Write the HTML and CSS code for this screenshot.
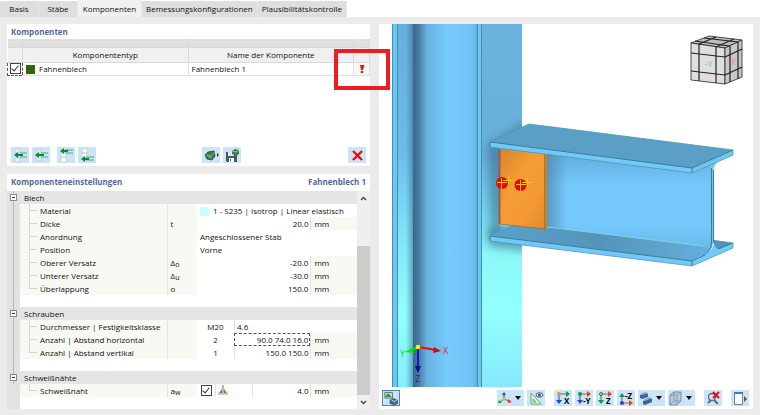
FILE: index.html
```html
<!DOCTYPE html>
<html lang="de">
<head>
  <meta charset="UTF-8" />
  <meta name="viewport" content="width=device-width, initial-scale=1.0"/>
  <title>Komponenten</title>
  <link rel="stylesheet" href="styles.css">
</head>
<body>
  <nav class="tabs">
    <button class="tab">Basis</button>
    <button class="tab">Stäbe</button>
    <button class="tab active">Komponenten</button>
    <button class="tab wide">Bemessungskonfigurationen</button>
    <button class="tab wide">Plausibilitätskontrolle</button>
  </nav>

  <main class="workspace">
    <div class="left">
      <section class="panel components">
        <h2>Komponenten</h2>
        <table class="comp-table">
          <colgroup><col class="c-check"><col><col><col class="c-flag"></colgroup>
          <thead>
            <tr class="strip"><th></th><th></th><th></th><th></th></tr>
            <tr><th></th><th>Komponententyp</th><th>Name der Komponente</th><th></th></tr>
          </thead>
          <tbody>
            <tr>
              <td class="check-cell"><input type="checkbox" class="check" aria-label="Fahnenblech" checked></td>
              <td><span class="swatch green"></span>Fahnenblech</td>
              <td class="name">Fahnenblech 1</td>
              <td class="flag">
                <svg width="6" height="10" viewBox="0 0 6 10"><path d="M1 1h4.500L4 6H2z" fill="#f01020"/><circle cx="3" cy="8" r="1.3" fill="#f01020"/></svg>
              </td>
            </tr>
          </tbody>
        </table>
        <div class="toolbar comp-tools">
          <div class="group">
            <button class="tool" aria-label="Davor einfügen"><svg width="17" height="15" viewBox="0 0 17 15"><path d="M3 1h5v4H3zM3 10h5v4H3z" fill="#e8eef4" stroke="#b9c4d0" stroke-width=".6"/><path d="M8 5h7M8 9h7" stroke="#55a56c"/><path d="M2 7l4-3v2h5v2H6v2z" fill="#07883c"/></svg></button>
            <button class="tool" aria-label="Dahinter einfügen"><svg width="17" height="15" viewBox="0 0 17 15"><path d="M3 1h5v12H3z" fill="#dce5ee" stroke="#b9c4d0" stroke-width=".6"/><path d="M8 5h7M8 9h7" stroke="#55a56c"/><path d="M2 7l4-3v2h5v2H6v2z" fill="#07883c"/></svg></button>
          </div>
          <div class="group">
            <button class="tool" aria-label="Nach oben"><svg width="17" height="15" viewBox="0 0 17 15"><path d="M3 5h5v4H3zM3 9h5v5H3z" fill="#fff" stroke="#b9c4d0" stroke-width=".6"/><path d="M7 2h8M7 5h8" stroke="#55a56c"/><path d="M2 3l4-3v2h4v2H6v2z" fill="#07883c"/></svg></button>
            <button class="tool" aria-label="Nach unten"><svg width="17" height="15" viewBox="0 0 17 15"><path d="M3 1h5v4H3zM3 5h5v4H3z" fill="#fff" stroke="#b9c4d0" stroke-width=".6"/><path d="M7 9h8M7 12h8" stroke="#55a56c"/><path d="M2 11l4-3v2h4v2H6v2z" fill="#07883c"/></svg></button>
          </div>
          <div class="group library">
            <button class="tool" aria-label="Laden"><svg width="17" height="15" viewBox="0 0 17 15"><path d="M2 7l3-3 6-1 1 5-3 4-5-1z" fill="#3c7a4c" stroke="#24452e" stroke-width=".8"/><path d="M3 7l5 1 4-4M5 9h2M8 8v3" stroke="#9bc7a3" fill="none" stroke-width=".7"/><path d="M14 5l2 2-2 2z" fill="#333"/></svg></button>
            <button class="tool" aria-label="Speichern"><svg width="17" height="15" viewBox="0 0 17 15"><path d="M2 4h10l1 1v9H3l-1-1z" fill="#4c5661"/><path d="M4 4h6v4H4z" fill="#dfe8f0"/><path d="M5 10h5v4H5z" fill="#fff"/><path d="M6 11h1v2H6z" fill="#4c5661"/><path d="M8 3l3-2 4 1v4l-3 2-4-2z" fill="#3c7a4c"/><path d="M8 3l4 1 3-2" stroke="#9bc7a3" fill="none"/></svg></button>
          </div>
          <button class="tool delete" aria-label="Löschen"><svg width="17" height="15" viewBox="0 0 17 15"><path d="M4 3l9 9M13 3l-9 9" stroke="#f00a0a" stroke-width="2.4"/></svg></button>
        </div>
        <div class="marker"></div>
      </section>

      <section class="panel settings">
        <h2>Komponenteneinstellungen <span>Fahnenblech 1</span></h2>
        <div class="settings-body">
          <div class="scroll-area">
            <table class="prop-table">
              <colgroup><col class="c-tree"><col class="c-label"><col class="c-sym"><col><col class="c-unit"></colgroup>
              <tbody>
                <tr class="head"><td class="tree"><i class="minus"></i></td><th colspan="4">Blech</th></tr>
                <tr><td class="tree"></td><td class="label">Material</td><td class="sym"></td><td class="value" colspan="2"><span class="swatch cyan"></span>1 - S235 | Isotrop | Linear elastisch</td></tr>
                <tr><td class="tree"></td><td class="label">Dicke</td><td class="sym">t</td><td class="value num">20.0</td><td class="unit">mm</td></tr>
                <tr><td class="tree"></td><td class="label">Anordnung</td><td class="sym"></td><td class="value" colspan="2">Angeschlossener Stab</td></tr>
                <tr><td class="tree"></td><td class="label">Position</td><td class="sym"></td><td class="value" colspan="2">Vorne</td></tr>
                <tr><td class="tree"></td><td class="label">Oberer Versatz</td><td class="sym">Δ<small>o</small></td><td class="value num">-20.0</td><td class="unit">mm</td></tr>
                <tr><td class="tree"></td><td class="label">Unterer Versatz</td><td class="sym">Δ<small>u</small></td><td class="value num">-30.0</td><td class="unit">mm</td></tr>
                <tr><td class="tree"></td><td class="label last">Überlappung</td><td class="sym">o</td><td class="value num">150.0</td><td class="unit">mm</td></tr>
                <tr class="blank"><td class="tree"></td><td colspan="4"></td></tr>
                <tr class="head"><td class="tree"><i class="minus"></i></td><th colspan="4">Schrauben</th></tr>
                <tr><td class="tree"></td><td class="label">Durchmesser | Festigkeitsklasse</td><td class="sym"></td><td class="value" colspan="2"><div class="split"><span class="count">M20</span><span class="part">4.6</span></div></td></tr>
                <tr><td class="tree"></td><td class="label"><label for="spacing">Anzahl | Abstand horizontal</label></td><td class="sym"></td><td class="value"><div class="split"><span class="count">2</span><input type="text" id="spacing" value="90.0 74.0 16.0"></div></td><td class="unit">mm</td></tr>
                <tr><td class="tree"></td><td class="label last">Anzahl | Abstand vertikal</td><td class="sym"></td><td class="value"><div class="split"><span class="count">1</span><span class="part num">150.0 150.0</span></div></td><td class="unit">mm</td></tr>
                <tr class="blank"><td class="tree"></td><td colspan="4"></td></tr>
                <tr class="head"><td class="tree"><i class="minus"></i></td><th colspan="4">Schweißnähte</th></tr>
                <tr><td class="tree end"></td><td class="label last"><label for="weld">Schweißnaht</label></td><td class="sym">a<small>w</small></td><td class="value"><div class="split"><span class="weld-check"><input type="checkbox" class="check" id="weld" checked></span><span class="weld-icon"><svg width="10" height="10" viewBox="0 0 10 10"><path d="M4 0h2v8H4z" fill="#9db8d6"/><path d="M0 8h10v2H0z" fill="#b4cbe4"/><path d="M4 4v4H1zM6 4v4h3z" fill="#b5651d"/></svg></span><span class="part num">4.0</span></div></td><td class="unit">mm</td></tr>
              </tbody>
            </table>
          </div>
          <div class="scrollbar">
            <button aria-label="Hoch"><svg width="7" height="5" viewBox="0 0 7 5"><path d="M1 4l2.500-2.500L6 4" fill="none" stroke="#444" stroke-width="1.400"/></svg></button>
            <div class="thumb"></div>
            <button aria-label="Runter"><svg width="7" height="5" viewBox="0 0 7 5"><path d="M1 1l2.500 2.500L6 1" fill="none" stroke="#444" stroke-width="1.400"/></svg></button>
          </div>
        </div>
      </section>
    </div>

    <section class="panel viewer">
      <svg class="scene" viewBox="379 24 374 363">
        <defs>
          <linearGradient id="flangeL" x1="0" y1="0" x2="0" y2="1">
            <stop offset="0" stop-color="#68aedb"/><stop offset=".35" stop-color="#6cbce9"/><stop offset=".6" stop-color="#82e6fa"/><stop offset=".8" stop-color="#90fffb"/><stop offset="1" stop-color="#85eefc"/>
          </linearGradient>
          <linearGradient id="flangeR" x1="0" y1="0" x2="0" y2="1">
            <stop offset="0" stop-color="#69b3de"/><stop offset=".36" stop-color="#68b0dc"/><stop offset=".5" stop-color="#79d2ee"/><stop offset=".64" stop-color="#8cf9f7"/><stop offset=".8" stop-color="#93ffff"/><stop offset="1" stop-color="#86e8ff"/>
          </linearGradient>
          <linearGradient id="web">
            <stop offset="0" stop-color="#3a6788"/><stop offset=".08" stop-color="#467a9f"/><stop offset=".2" stop-color="#68b2e0"/><stop offset=".5" stop-color="#76cafd"/><stop offset=".85" stop-color="#72c3f5"/><stop offset="1" stop-color="#5c9fc8"/>
          </linearGradient>
          <linearGradient id="shadeL">
            <stop offset=".4" stop-color="#3d7399" stop-opacity="0"/><stop offset="1" stop-color="#345f80" stop-opacity=".6"/>
          </linearGradient>
          <linearGradient id="beamWeb" x1="0" y1="0" x2="0" y2="1">
            <stop offset="0" stop-color="#5fa7d4"/><stop offset=".35" stop-color="#75c8fb"/><stop offset=".75" stop-color="#75c8fb"/><stop offset="1" stop-color="#68b6e5"/>
          </linearGradient>
          <linearGradient id="webShade">
            <stop offset="0" stop-color="#4b86ab" stop-opacity=".7"/><stop offset="1" stop-color="#4b86ab" stop-opacity="0"/>
          </linearGradient>
          <linearGradient id="bottomTop">
            <stop offset="0" stop-color="#5ba0c9"/><stop offset=".5" stop-color="#5594ba"/><stop offset="1" stop-color="#64b0dc"/>
          </linearGradient>
          <linearGradient id="plate" x1="0" y1="0" x2="1" y2="1">
            <stop offset="0" stop-color="#d5852c"/><stop offset=".4" stop-color="#f59c34"/><stop offset=".7" stop-color="#f59932"/><stop offset="1" stop-color="#de892c"/>
          </linearGradient>
          <filter id="soft" x="-50%" y="-50%" width="200%" height="200%"><feGaussianBlur stdDeviation="5"/></filter>
          <clipPath id="clipR"><path d="M482 24h40v363h-40z"/></clipPath>
        </defs>

        <!-- column -->
        <path d="M392 24h22v363h-22z" fill="url(#flangeL)"/>
        <path d="M400 24h14v363h-14z" fill="url(#shadeL)"/>
        <path d="M413 24h69v363h-69z" fill="url(#web)"/>
        <path d="M392 24h5v363h-5zM478 24h4v363h-4z" fill="#70c4f3"/>
        <path d="M482 24h40v363h-40z" fill="url(#flangeR)"/>
        <g clip-path="url(#clipR)">
          <path d="M488 145l40-25v20l-30 100h-8z" fill="#2f6080" opacity=".5" filter="url(#soft)"/>
          <path d="M488 229l40-3v25l-38-5z" fill="#2f6080" opacity=".55" filter="url(#soft)"/>
        </g>
        <path d="M392.500 24v363M397.500 24v363M477.500 24v363M481.500 24v363" stroke="#3b96ac"/>

        <!-- beam -->
        <path d="M500 148L712 166V248L704 252L500 226z" fill="url(#beamWeb)"/>
        <path d="M547 152h20v78l-20-2z" fill="url(#webShade)"/>
        <path d="M490 236L512 225L547 227L704 247L711 249L708 254L692 261z" fill="url(#bottomTop)"/>
        <path d="M547 227L706 246" stroke="#80d2df"/>
        <path d="M710 163L719 161Q714 164 713.500 171V240Q714 247 706 254L692 261L700 256Q711 252 711.500 243V171Q711 166 707 166z" fill="#73c8f7"/>
        <path d="M711.500 168V243Q711 252 702 256M713.500 170V243" fill="none" stroke="#357f98"/>
        <path d="M714 240L733 243L717 251Q713 249 714 240z" fill="#5493ba"/>
        <path d="M692 261L706 254Q713 250 714 243Q715 249 719 249L733 243V248L692 266z" fill="#74caf9"/>
        <path d="M490 236L692 261V266L490 241z" fill="#73c8fb"/>
        <path d="M490 241V236L692 261L705 255M692 261V266M718 249L733 243" fill="none" stroke="#2f8195"/>
        <path d="M490 241L692 266L733 248V243L716 241" fill="none" stroke="#4a8fae" stroke-width=".7"/>

        <!-- fin plate -->
        <path d="M499 149L546 154.500V229L499 224z" fill="url(#plate)"/>
        <path d="M544.500 154L547 154.500V228.500L544.500 229z" fill="#cc811f"/>
        <path d="M499.500 149V224" stroke="#9e5954" stroke-width="2"/>
        <path d="M544.500 154.500V229M499 224L546 229" fill="none" stroke="#9b7232" stroke-width=".8"/>

        <path d="M490 142L529 124L733 150L692 168z" fill="#5c9fc6"/>
        <path d="M490 142L692 168V173L490 147z" fill="#74c9fc"/>
        <path d="M692 168L733 150V155L692 173z" fill="#71c5f4"/>
        <path d="M490 147V142L692 168L733 150M692 168V173" fill="none" stroke="#2f8195"/>
        <path d="M490 142L529 124L733 150V155L692 173L490 147" fill="none" stroke="#4c99a9" stroke-width=".8"/>

        <!-- bolts -->
        <circle cx="502" cy="183" r="6" fill="#e80707"/>
        <circle cx="520.500" cy="185" r="6" fill="#e80707"/>
        <path d="M497 182.500h10M501.500 178v11M516 184.500h10M520.500 180v11M503 180.500h10M508.500 175v10M522 182.500h10M527.500 177v10" stroke="#fcc01a"/>

        <!-- axes -->
        <path d="M418 347L436 350" stroke="#e01010" stroke-width="2"/><path d="M434 347l7 4-8 2z" fill="#d40808"/>
        <path d="M418 347V369" stroke="#1414c8" stroke-width="2"/><path d="M415 366h6l-3 7z" fill="#0a0aa0"/>
        <path d="M418 347L410 351" stroke="#0d0" stroke-width="2"/><path d="M412 348l2 5-9-1z" fill="#00f000"/>
        <circle cx="418" cy="347" r="2.300" fill="#ffee08"/>
        <g class="axis">
          <text x="443" y="354" fill="#f02020">X</text>
          <text x="400" y="357" fill="#00e800">Y</text>
          <text x="415" y="382" fill="#1515e8">Z</text>
        </g>

        <!-- navigation cube -->
        <g stroke="#222" stroke-width=".8" stroke-linejoin="round">
          <path d="M691 43L709 36L742 40L725 48z" fill="#bfbfc1"/>
          <path d="M691 43L725 48V84L691 80z" fill="#dfdfdf"/>
          <path d="M725 48L742 40V77L725 84z" fill="#c9c9c9"/>
          <path d="M691 53L725 57L742 49M691 71L725 75L742 67M699 44V81M716 47V83M730 46V82M738 42V79M699 44L716 37M716 47L734 39M695 41L729 46M704 38L738 42" fill="none" stroke-width="1.200"/>
        </g>
        <g class="cube-text">
          <text x="705" y="67" fill="#7cdc80">-Y</text>
          <text x="731" y="65" fill="#e89a9a">X</text>
        </g>
      </svg>

      <div class="toolbar view-tools">
        <button class="tool pressed" aria-label="Modell"><svg width="17" height="15" viewBox="0 0 17 15"><path d="M2 1h8v6H2z" fill="#e7dfa0" stroke="#536b7c"/><path d="M3 4l3-2 3 4H3z" fill="#3e9148"/><path d="M7 9l4-2 5 2v4l-4 2-5-2z" fill="#436a8d"/><path d="M9 9l3 2 3-2" stroke="#d1e1ef" fill="none"/></svg></button>
        <button class="tool drop first" aria-label="Achsen"><svg width="17" height="15" viewBox="0 0 17 15"><path d="M7 8V3" stroke="#2049c0"/><path d="M5 4h4L7 1z" fill="#2049c0"/><path d="M7 8l-4 3" stroke="#20a040"/><path d="M2 9l3 3H1z" fill="#20a040"/><path d="M7 8l5 2" stroke="#d04020"/><path d="M11 8l4 3-4 1z" fill="#d04020"/><circle cx="7" cy="8" r="1.500" fill="#eeb820"/></svg><i class="arrow"></i></button>
        <button class="tool" aria-label="Messen"><svg width="17" height="15" viewBox="0 0 17 15"><path d="M3 2v11h10z" fill="#e5f4e5" stroke="#60b464"/><path d="M5 8v3h3z" fill="none" stroke="#60b464"/><ellipse cx="11.500" cy="4" rx="3.500" ry="2.200" fill="#fff" stroke="#44518c"/><circle cx="11.500" cy="4" r="1.500" fill="#44518c"/></svg></button>
        <div class="group views">
          <button class="tool" aria-label="X"><svg width="17" height="15" viewBox="0 0 17 15"><path d="M4 3h8" stroke="#169748"/><path d="M11 0l4 3-4 3z" fill="#169748"/><path d="M4 3v7" stroke="#1c48d0"/><path d="M1 9h6l-3 4z" fill="#1c48d0"/><circle cx="4" cy="3" r="2" fill="#f09020"/><text x="9" y="13">X</text></svg></button>
          <button class="tool" aria-label="-Y"><svg width="17" height="15" viewBox="0 0 17 15"><path d="M4 3h8" stroke="#d84a20"/><path d="M11 0l4 3-4 3z" fill="#d84a20"/><path d="M4 3v7" stroke="#1c48d0"/><path d="M1 9h6l-3 4z" fill="#1c48d0"/><circle cx="4" cy="3" r="2" fill="#169748"/><text x="7" y="13">-Y</text></svg></button>
          <button class="tool" aria-label="Z"><svg width="17" height="15" viewBox="0 0 17 15"><path d="M4 3h8" stroke="#d84a20"/><path d="M11 0l4 3-4 3z" fill="#d84a20"/><path d="M4 3v7" stroke="#169748"/><path d="M1 9h6l-3 4z" fill="#169748"/><circle cx="4" cy="3" r="1.500" fill="#ffe23b" stroke="#334" stroke-width=".8"/><text x="9" y="13">Z</text></svg></button>
          <button class="tool" aria-label="-Z"><svg width="17" height="15" viewBox="0 0 17 15"><path d="M4 12h8" stroke="#d84a20"/><path d="M11 9l4 3-4 3z" fill="#d84a20"/><path d="M4 12V5" stroke="#169748"/><path d="M1 6h6L4 2z" fill="#169748"/><circle cx="4" cy="12" r="2" fill="#1c48d0"/><text x="7" y="8">-Z</text></svg></button>
          <button class="tool drop" aria-label="Darstellung"><svg width="17" height="15" viewBox="0 0 17 15"><path d="M2 4l6-2 2 1v3l-6 2-2-1z" fill="#3d6790"/><path d="M2 3l5-2 3 1-6 2z" fill="#8db0d0"/><path d="M5 10l7-3 2 1v3l-7 3-2-1z" fill="#3d6790"/><path d="M5 9l6-3 3 1-7 3z" fill="#8db0d0"/></svg><i class="arrow"></i></button>
          <button class="tool drop" aria-label="Drahtmodell"><svg width="17" height="15" viewBox="0 0 17 15"><path d="M2 4l4-3h7v9l-4 4H2z" fill="#b8ccdf" stroke="#7b8fa8"/><path d="M2 4h7l4-3M9 4v10M6 1v9l-4 4M6 10h7" fill="none" stroke="#7b8fa8" stroke-width=".8"/></svg><i class="arrow"></i></button>
        </div>
        <button class="tool" aria-label="Zoom aufheben"><svg width="17" height="15" viewBox="0 0 17 15"><circle cx="7" cy="6" r="3.500" fill="none" stroke="#606b74" stroke-width="1.300"/><path d="M9 9l4 4M3 12l3-3" stroke="#606b74" stroke-width="2"/><path d="M8 1l6 6M14 1L8 7" stroke="#e80a1a" stroke-width="2"/></svg></button>
        <button class="tool last" aria-label="Fenster"><svg width="17" height="15" viewBox="0 0 17 15"><path d="M2.500 1.500h8v12h-8z" fill="#fff" stroke="#73808c"/><path d="M2 1h9v2H2z" fill="#3978cf"/><path d="M12 5l3 3-3 3z" fill="#555"/></svg></button>
      </div>
    </section>
  </main>
</body>
</html>
```
FILE: styles.css
```css
* {
  box-sizing: border-box;
}
body {
  margin: 0;
  min-height: 100vh;
  display: flex;
  flex-direction: column;
  background: #ebebeb;
  color: #111;
  font-family: "Open Sans", "Noto Sans", sans-serif;
  font-size: 8px;
  line-height: 12px;
}
button, input {
  font: inherit;
  color: inherit;
  margin: 0;
  padding: 0;
}
svg {
  display: block;
}

/* tabs */
.tabs {
  display: flex;
  align-items: flex-end;
  height: 17px;
  background: #fff;
}
.tab {
  height: 16px;
  width: 39px;
  background: #dedede;
  border: none;
  border-right: 1px solid #e8e8e8;
  white-space: nowrap;
}
.tab.active {
  width: 64px;
  height: 17px;
  background: #f0f0f0;
}
.tab.wide {
  width: auto;
  padding: 0 4px;
}

.workspace {
  flex: 1;
  display: grid;
  grid-template-columns: 363fr 374fr;
  gap: 9px;
  padding: 7px 7px 6px;
}
.left {
  display: flex;
  flex-direction: column;
  gap: 8px;
}
.panel {
  position: relative;
  background: #fff;
}
h2 {
  display: flex;
  justify-content: space-between;
  margin: 0;
  padding: 1px 4px;
  font-size: 8px;
  line-height: 13px;
  font-weight: 700;
  color: #566a95;
}

/* component list */
.components {
  height: 142px;
  display: flex;
  flex-direction: column;
}
table {
  width: 100%;
  table-layout: fixed;
  border-collapse: collapse;
}
th, td {
  padding: 0;
  font-weight: normal;
  white-space: nowrap;
}
.c-check {
  width: 15px;
}
.c-flag {
  width: 16px;
}
.comp-table th {
  height: 15px;
  background: #f0f0f0;
  border-right: 1px solid #d9d9d9;
  border-bottom: 1px solid #d9d9d9;
}
.comp-table .strip th {
  height: 8px;
  background: #dfdfdf;
}
.comp-table td {
  height: 13px;
  border-right: 1px solid #e0e0e0;
  border-bottom: 1px solid #e0e0e0;
}
.comp-table .check-cell {
  border: 1px dashed #555;
}
.comp-table .name {
  padding-left: 3px;
}
.comp-table .flag {
  background: #f8f8f2;
}
.flag svg {
  margin: auto;
}
.check {
  appearance: none;
  display: block;
  width: 11px;
  height: 11px;
  margin: 0 auto;
  border: 1px solid #444;
  background: #fff;
}
.check:checked::after {
  content: "";
  display: block;
  width: 3px;
  height: 6px;
  margin: 0 auto;
  border: solid #333;
  border-width: 0 1px 1px 0;
  transform: rotate(40deg);
}
.swatch {
  display: inline-block;
  width: 9px;
  height: 9px;
  margin: 0 4px 0 3px;
  vertical-align: middle;
}
.swatch.green {
  background: #336600;
}
.swatch.cyan {
  margin-left: 0;
  background: #c8ffff;
}
.marker {
  position: absolute;
  z-index: 2;
  top: 25px;
  right: -20px;
  width: 56px;
  height: 41px;
  border: 4px solid #ed1c24;
}

/* toolbars */
.toolbar {
  display: flex;
  align-items: center;
}
.comp-tools {
  gap: 7px;
  margin-top: auto;
  padding: 3px 4px;
}
.group {
  display: flex;
  gap: 3px;
}
.library {
  margin-left: 99px;
}
.delete {
  margin-left: auto;
}
.tool {
  flex: none;
  display: flex;
  align-items: center;
  justify-content: center;
  width: 18px;
  height: 16px;
  border: none;
  background: #cce4f7;
}
.tool.pressed {
  border: 1px solid #4f86b5;
}
.tool.drop {
  width: 27px;
  justify-content: space-between;
  padding-right: 3px;
}
.tool text {
  font-size: 8px;
  font-weight: bold;
}
.arrow {
  border: solid transparent;
  border-width: 4px 3px 0;
  border-top-color: #111;
}

/* settings */
.settings {
  flex: 1;
  display: flex;
  flex-direction: column;
}
.settings h2 {
  padding-bottom: 3px;
}
.settings-body {
  flex: 1;
  display: flex;
}
.scroll-area {
  flex: 1;
  background: linear-gradient(90deg, #e2e2e2 13px, #fff 13px);
}
.c-tree {
  width: 13px;
}
.c-label {
  width: 147px;
}
.c-sym {
  width: 30px;
}
.c-unit {
  width: 46px;
}
.prop-table td, .prop-table th {
  height: 13px;
  text-align: left;
}
.prop-table .blank td {
  height: 12px;
}
.prop-table .tree {
  background: linear-gradient(90deg, transparent 6px, #bbb 6px, #bbb 7px, transparent 7px);
}
.prop-table .tree.end {
  background: none;
}
.minus {
  display: flex;
  align-items: center;
  width: 7px;
  height: 7px;
  margin-left: 3px;
  border: 1px solid #888;
  background: #fff;
}
.minus::after {
  content: "";
  width: 3px;
  height: 1px;
  margin: auto;
  background: #333;
}
.prop-table th {
  padding-left: 4px;
  background: #e5e5e5;
}
.prop-table .label {
  padding-left: 20px;
  background:
    linear-gradient(#d4d4d4, #d4d4d4) 9px 6px / 8px 1px no-repeat,
    linear-gradient(#d4d4d4, #d4d4d4) 9px 0 / 1px 100% no-repeat,
    #f8f9f3;
}
.prop-table .label.last {
  background:
    linear-gradient(#d4d4d4, #d4d4d4) 9px 6px / 8px 1px no-repeat,
    linear-gradient(#d4d4d4, #d4d4d4) 9px 0 / 1px 6px no-repeat,
    #f8f9f3;
}
.sym {
  padding-left: 3px;
  background: #f8f9f3;
  border-left: 1px solid #e3e3e3;
}
.sym small {
  font-size: 7px;
  vertical-align: -1px;
  line-height: 1;
}
.value {
  padding-left: 3px;
}
.prop-table .num {
  padding-right: 2px;
  text-align: right;
}
.unit {
  padding-left: 3px;
  background: #f8f9f3;
  border-left: 1px solid #e3e3e3;
}
.split {
  display: flex;
  height: 13px;
  line-height: 14px;
  margin-left: -3px;
}
.count {
  width: 37px;
  text-align: center;
}
.part {
  flex: 1;
  padding-left: 2px;
  border-left: 1px solid #e3e3e3;
}
.split input[type="text"] {
  flex: 1;
  min-width: 0;
  border: 1px dashed #555;
  padding-right: 1px;
  text-align: right;
}
.weld-check {
  width: 18px;
  padding: 1px 3px;
}
.weld-icon {
  width: 37px;
  padding: 1px 2px;
  border-left: 1px solid #e3e3e3;
}
.scrollbar {
  width: 13px;
  display: flex;
  flex-direction: column;
  background: #efefef;
}
.scrollbar button {
  display: flex;
  align-items: center;
  justify-content: center;
  height: 14px;
  border: none;
  background: none;
}
.thumb {
  flex: 1;
  margin-top: 41px;
  background: #cdcdcd;
}

/* 3D view */
.viewer {
  display: flex;
  flex-direction: column;
}
.scene {
  width: 100%;
}
.axis text {
  font-size: 9px;
}
.cube-text text {
  font-size: 8px;
  font-weight: 600;
}
.view-tools {
  gap: 3px;
  margin-top: auto;
  padding: 3px 4px 3px 3px;
}
.view-tools .group {
  margin: 0 6px;
}
.view-tools .first {
  margin-left: auto;
}
.view-tools .last {
  margin-left: 6px;
}
```
